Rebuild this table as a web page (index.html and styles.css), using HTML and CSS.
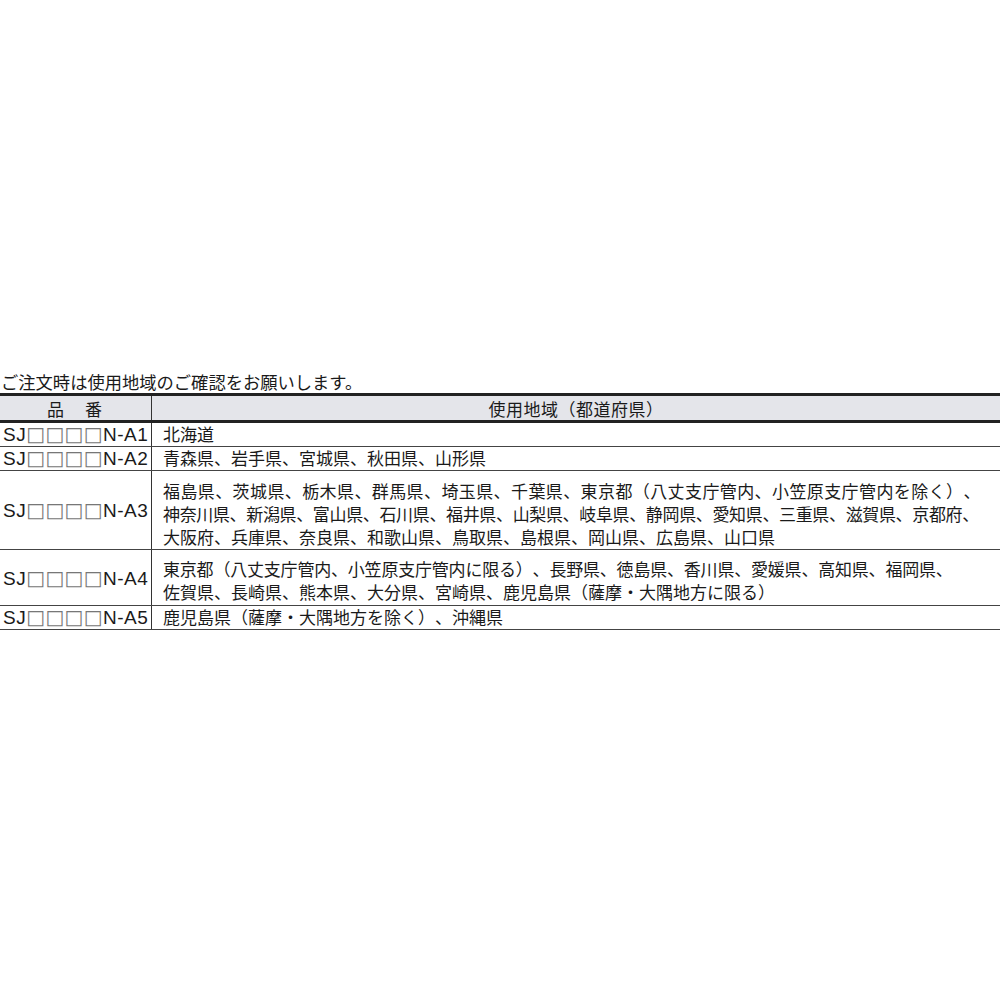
FILE: index.html
```html
<!DOCTYPE html>
<html lang="ja">
<head>
<meta charset="utf-8">
<link rel="stylesheet" href="styles.css">
</head>
<body>
<div class="page">
  <p class="note">ご注文時は使用地域のご確認をお願いします。</p>
  <table class="regions">
    <thead>
      <tr>
        <th class="col-code">品　番</th>
        <th class="col-area">使用地域（都道府県）</th>
      </tr>
    </thead>
    <tbody>
      <tr class="r1">
        <td class="code"><span class="lat">SJ</span><span class="box">□□□□</span><span class="lat">N-A1</span></td>
        <td class="area">北海道</td>
      </tr>
      <tr class="r1">
        <td class="code"><span class="lat">SJ</span><span class="box">□□□□</span><span class="lat">N-A2</span></td>
        <td class="area">青森県、岩手県、宮城県、秋田県、山形県</td>
      </tr>
      <tr class="r3">
        <td class="code"><span class="lat">SJ</span><span class="box">□□□□</span><span class="lat">N-A3</span></td>
        <td class="area"><span class="wide">福島県、茨城県、栃木県、群馬県、埼玉県、千葉県、東京都（八丈支庁管内、小笠原支庁管内を除く）、</span><br><span class="narrow">神奈川県、新潟県、富山県、石川県、福井県、山梨県、岐阜県、静岡県、愛知県、三重県、滋賀県、京都府、</span><br>大阪府、兵庫県、奈良県、和歌山県、鳥取県、島根県、岡山県、広島県、山口県</td>
      </tr>
      <tr class="r2">
        <td class="code"><span class="lat">SJ</span><span class="box">□□□□</span><span class="lat">N-A4</span></td>
        <td class="area"><span class="snug">東京都（八丈支庁管内、小笠原支庁管内に限る）、長野県、徳島県、香川県、愛媛県、高知県、福岡県、</span><br>佐賀県、長崎県、熊本県、大分県、宮崎県、鹿児島県（薩摩・大隅地方に限る）</td>
      </tr>
      <tr class="r1">
        <td class="code"><span class="lat">SJ</span><span class="box">□□□□</span><span class="lat">N-A5</span></td>
        <td class="area">鹿児島県（薩摩・大隅地方を除く）、沖縄県</td>
      </tr>
    </tbody>
  </table>
</div>
</body>
</html>
```

FILE: styles.css
```css
html, body {
  margin: 0;
  padding: 0;
  background: #ffffff;
}
body {
  font-family: "Noto Sans CJK JP", "Noto Sans", sans-serif;
  color: #1a1a1a;
  font-size: 17px;
  text-spacing-trim: space-all;
}
.page {
  padding-top: 370px;
}
.note {
  margin: 0 0 0 1px;
  line-height: 23px;
  font-size: 17.3px;
}
.regions {
  width: 1000px;
  border-collapse: collapse;
  table-layout: fixed;
}
.regions th {
  background: #e4e5ea;
  font-weight: normal;
  text-align: center;
  height: 24px;
  padding: 0;
  line-height: 23px;
  border-top: 3px solid #222;
  border-bottom: 3px solid #222;
}
.regions th.col-code {
  width: 151px;
  border-right: 1.5px solid #333;
  letter-spacing: 2px;
}
.regions th.col-area {
  letter-spacing: 0.5px;
}
.regions td {
  padding: 0;
  line-height: 23px;
  border-bottom: 1.5px solid #444;
}
.regions td.code {
  border-right: 1.5px solid #333;
  padding-left: 3px;
  white-space: nowrap;
  vertical-align: middle;
}
.regions td.area {
  padding-left: 11px;
  white-space: nowrap;
}
.wide {
  letter-spacing: 0.4px;
}
.narrow {
  letter-spacing: -0.35px;
}
.snug {
  letter-spacing: -0.2px;
}
.r1 td {
  line-height: 22.8px;
}
.r3 td.area {
  padding-top: 7.5px;
  padding-bottom: 1.5px;
}
.r2 td.area {
  padding-top: 6.5px;
  padding-bottom: 2.5px;
}
.lat {
  font-family: "Liberation Sans", Arial, sans-serif;
  font-size: 19px;
  letter-spacing: 0.5px;
  line-height: 22px;
}
.box {
  font-family: "DejaVu Sans", sans-serif;
  color: #777;
  font-size: 20px;
  letter-spacing: 0.3px;
  line-height: 22px;
}
```
